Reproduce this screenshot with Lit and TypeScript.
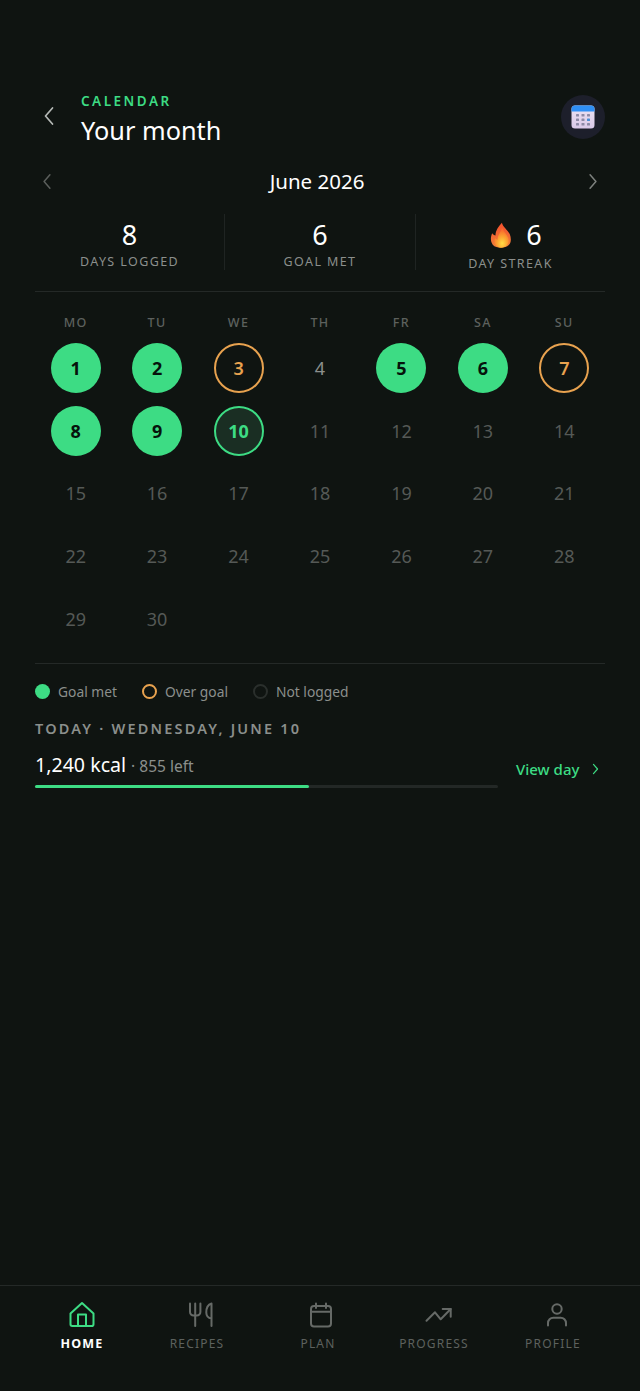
import { LitElement, html, css, svg } from "lit";
import { customElement } from "lit/decorators.js";

const chevron = (dir: "l" | "r", cls: string) => html`<svg class=${cls} viewBox="0 0 12 20" fill="none" stroke="currentColor" stroke-width="2" stroke-linecap="round" stroke-linejoin="round"><path d=${dir === "l" ? "M9.5 2 2.5 10l7 8" : "M2.5 2l7 8-7 8"}></path></svg>`;

type Day = { n: number; k: string };
const kinds: Record<number, string> = { 1: "met", 2: "met", 3: "over", 4: "past", 5: "met", 6: "met", 7: "over", 8: "met", 9: "met", 10: "today" };
const days: Day[] = Array.from({ length: 30 }, (_, i) => ({ n: i + 1, k: kinds[i + 1] ?? "future" }));

const navItems = [
  { label: "HOME", active: true, shift: 0, icon: svg`<path d="M2.500 12.500 14 2l11.500 10.500v10.700a1.800 1.800 0 0 1-1.800 1.800H4.300a1.800 1.800 0 0 1-1.800-1.800z"/><path d="M10 25V13.500h8V25"/>` },
  { label: "RECIPES", active: false, shift: 8, icon: svg`<path d="M3 2.500v8.500a3.500 3.500 0 0 0 3.500 3.500h3.400a3.500 3.500 0 0 0 3.500-3.500V2.500M8.200 2.500V25"/><path d="M24.500 25V2.500c-3.500 1-5.200 5-5.200 9 0 3 2 5.500 5.200 6"/>` },
  { label: "PLAN", active: false, shift: 6, icon: svg`<rect x="4" y="5" width="20" height="20.500" rx="3"/><path d="M4 10.700h20M9 2.500v4.500M19 2.500v4.500"/>` },
  { label: "PROGRESS", active: false, shift: 9, icon: svg`<path d="M1.500 19.700 10 11.300l5.700 7L25.700 8"/><path d="M17.700 8h8v7.700"/>` },
  { label: "PROFILE", active: false, shift: 8, icon: svg`<circle cx="14" cy="8" r="4.700"/><path d="M5 24.500V22a5.300 5.300 0 0 1 5.300-5.300h7.400A5.300 5.300 0 0 1 23 22v2.500"/>` },
];

@customElement("app-root")
export class AppRoot extends LitElement {
  static styles = css`
    :host {
      display: flex;
      flex-direction: column;
      width: 640px;
      height: 1391px;
      background: #0f1411;
      color: #fff;
      font-family: "Noto Sans", "Open Sans", sans-serif;
      overflow: hidden;
    }
    .main { flex: 1; padding: 92px 35px 0; }
    .header { display: flex; align-items: center; height: 50px; }
    .back { width: 12px; height: 20px; color: #b5b9b6; margin-left: 8px; margin-right: 26px; margin-top: -2px; stroke-width: 1.700; }
    .titles { flex: 1; align-self: flex-start; }
    .eyebrow { font-size: 13.500px; line-height: 18px; letter-spacing: 2.500px; font-weight: 600; color: #3ddc84; }
    .title { font-size: 25.300px; line-height: 34px; margin-top: 3px; color: #fff; }
    .avatar { width: 44px; height: 44px; border-radius: 50%; background: #1d1f2b; display: flex; align-items: center; justify-content: center; }
    .avatar svg { width: 24px; height: 24px; }
    .month { display: flex; align-items: center; justify-content: space-between; margin-top: 19px; height: 40px; padding: 0 7px 0 7px; }
    .month svg { width: 10px; height: 17px; stroke-width: 1.800; }
    .month .prev { color: #5b5f5c; }
    .month .next { color: #7d817e; }
    .month span { font-size: 20.500px; color: #fff; margin-right: 6px; }
    .stats { display: grid; grid-template-columns: 190px 191px 189px; grid-template-rows: 56px; margin-top: 13px; }
    .stat { display: flex; flex-direction: column; align-items: center; border-right: 1px solid #1f2422; }
    .stat:last-child { border-right: 0; }
    .val { display: flex; align-items: center; gap: 14px; font-size: 27px; line-height: 38px; height: 38px; color: #fff; margin-top: 2px; }
    .stat:last-child .val { margin-left: 11px; }
    .val svg { width: 22px; height: 28px; margin-bottom: 1px; }
    .lab { font-size: 12.500px; line-height: 16px; letter-spacing: 1.400px; color: #8b8f8c; }
    .stat:last-child .lab { margin-top: 2px; }
    .rule { height: 1px; background: #242927; }
    .stats + .rule { margin-top: 21px; }
    .dows { display: grid; grid-template-columns: repeat(7, 1fr); margin-top: 23px; }
    .dows div { text-align: center; font-size: 12.500px; line-height: 16px; letter-spacing: 1.400px; font-weight: 500; color: #5d615e; }
    .grid { display: grid; grid-template-columns: repeat(7, 1fr); grid-auto-rows: 62.600px; margin-top: 6px; }
    .cell { display: flex; align-items: center; justify-content: center; }
    .d { width: 50px; height: 50px; box-sizing: border-box; border-radius: 50%; display: flex; align-items: center; justify-content: center; font-size: 18px; }
    .met { background: #3ddc84; color: #06130c; font-weight: 700; }
    .over { border: 2px solid #e8a24f; color: #e8a24f; font-weight: 600; }
    .today { border: 2px solid #3ddc84; background: #1a2e23; color: #3ddc84; font-weight: 700; }
    .past { color: #8b8f8c; }
    .future { color: #555956; }
    .grid + .rule { margin-top: 13px; }
    .legend { display: flex; align-items: center; margin-top: 19px; height: 18px; font-size: 13.800px; color: #8b8f8c; }
    .legend i { width: 15px; height: 15px; box-sizing: border-box; border-radius: 50%; margin-right: 8px; }
    .legend span { margin-right: 25px; }
    .l-met { background: #3ddc84; }
    .l-over { border: 2px solid #e8a24f; }
    .l-none { border: 2px solid #2a2f2c; }
    .today-h { margin-top: 17px; font-size: 14.500px; line-height: 20px; letter-spacing: 2.200px; font-weight: 600; color: #8b8f8c; }
    .today-row { display: flex; align-items: flex-start; margin-top: 11px; }
    .today-l { width: 463px; }
    .kcal { height: 30px; line-height: 31px; white-space: nowrap; color: #8b8f8c; font-size: 15.500px; }
    .kcal b { font-weight: 400; font-size: 19.600px; color: #fff; margin-right: 1px; }
    .bar { height: 3px; background: #232826; margin-top: 6px; border-radius: 2px; }
    .bar div { height: 100%; background: #3ddc84; border-radius: 2px; }
    .view { display: flex; align-items: center; margin-left: 18px; margin-top: 10px; height: 20px; color: #3ddc84; font-size: 15px; font-weight: 500; }
    .view svg { width: 7px; height: 12px; margin-left: 13px; }
    .nav { height: 106px; box-sizing: border-box; border-top: 1px solid #242927; display: grid; grid-template-columns: 114px 116px 126px 106px 132px; padding-left: 25px; }
    .item { display: flex; flex-direction: column; align-items: center; padding-top: 15px; color: #5d615e; }
    .item svg { width: 28px; height: 28px; fill: none; stroke: #666a67; stroke-width: 2; stroke-linecap: round; stroke-linejoin: round; }
    .item span { margin-top: 7px; font-size: 12px; line-height: 16px; letter-spacing: 1.200px; }
    .item.on svg { stroke: #3ddc84; }
    .item.on span { color: #fff; font-weight: 700; font-size: 12.500px; }
  `;

  render() {
    return html`
      <div class="main">
        <div class="header">
          ${chevron("l", "back")}
          <div class="titles">
            <div class="eyebrow">CALENDAR</div>
            <div class="title">Your month</div>
          </div>
          <div class="avatar">
            <svg viewBox="0 0 24 24">
              <defs><linearGradient id="cb" x1="0" y1="0" x2="0" y2="1"><stop offset="0" stop-color="#ede3f2"/><stop offset="1" stop-color="#d9c9e8"/></linearGradient></defs>
              <rect x="0.500" y="0.500" width="23" height="23" rx="3.500" fill="url(#cb)"/>
              <path d="M.5 6.500V4A3.500 3.500 0 0 1 4 .5h16A3.500 3.500 0 0 1 23.500 4v2.500z" fill="#2f8ff5"/>
              <g fill="#8d8aa6">
                <rect x="5" y="9" width="3" height="2.500" rx=".6"/><rect x="10.500" y="9" width="3" height="2.500" rx=".6"/><rect x="16" y="9" width="3" height="2.500" rx=".6"/>
                <rect x="5" y="13.500" width="3" height="2.500" rx=".6"/><rect x="10.500" y="13.500" width="3" height="2.500" rx=".6"/><rect x="16" y="13.500" width="3" height="2.500" rx=".6" fill="#4b8ed6"/>
                <rect x="5" y="18" width="3" height="2.500" rx=".6"/><rect x="10.500" y="18" width="3" height="2.500" rx=".6"/><rect x="16" y="18" width="3" height="2.500" rx=".6"/>
              </g>
            </svg>
          </div>
        </div>
        <div class="month">
          ${chevron("l", "prev")}
          <span>June 2026</span>
          ${chevron("r", "next")}
        </div>
        <div class="stats">
          <div class="stat"><div class="val">8</div><div class="lab">DAYS LOGGED</div></div>
          <div class="stat"><div class="val">6</div><div class="lab">GOAL MET</div></div>
          <div class="stat"><div class="val">
            <svg viewBox="0 0 24 28">
              <defs>
                <linearGradient id="f1" x1="0" y1="0" x2="0" y2="1"><stop offset="0" stop-color="#f4502c"/><stop offset="1" stop-color="#f0803a"/></linearGradient>
                <radialGradient id="f2" cx=".55" cy=".78" r=".65"><stop offset="0" stop-color="#ffdc45"/><stop offset=".55" stop-color="#fca130"/><stop offset="1" stop-color="#f8702c"/></radialGradient>
              </defs>
              <path d="M13 .5C14 5 19 8 21.500 13c2 5 1.500 9.500-1 12-2 2-5 2.800-8.500 2.800S5 27 3 24.500C.5 21.500.3 16 2.500 12c1 1.500 2 2.200 3.500 2.500C6 9 9 5 13 .5z" fill="url(#f1)"/>
              <path d="M13.500 6.500c1 3.500 5 6.500 6.500 11 1 3.500.2 6-1.800 8-1.500 1.500-3.700 2.300-6.200 2.300S7.800 27 6.200 25.300c-2-2.200-2-5.500-.7-8 .8 1 1.500 1.500 2.800 1.800C8 15 11 11 13.500 6.500z" fill="url(#f2)"/>
            </svg>
            6</div><div class="lab">DAY STREAK</div></div>
        </div>
        <div class="rule"></div>
        <div class="dows">${["MO", "TU", "WE", "TH", "FR", "SA", "SU"].map((d) => html`<div>${d}</div>`)}</div>
        <div class="grid">
          ${days.map((d) => html`<div class="cell"><div class="d ${d.k}">${d.n}</div></div>`)}
        </div>
        <div class="rule"></div>
        <div class="legend">
          <i class="l-met"></i><span>Goal met</span>
          <i class="l-over"></i><span>Over goal</span>
          <i class="l-none"></i><span>Not logged</span>
        </div>
        <div class="today-h">TODAY · WEDNESDAY, JUNE 10</div>
        <div class="today-row">
          <div class="today-l">
            <div class="kcal"><b>1,240 kcal</b> · 855 left</div>
            <div class="bar"><div style="width:${(1240 / 2095) * 100}%"></div></div>
          </div>
          <div class="view">View day ${chevron("r", "")}</div>
        </div>
      </div>
      <div class="nav">
        ${navItems.map((n) => html`<div class="item ${n.active ? "on" : ""}"><svg style="margin-left:${n.shift}px" viewBox="0 0 28 28">${n.icon}</svg><span>${n.label}</span></div>`)}
      </div>
    `;
  }
}
